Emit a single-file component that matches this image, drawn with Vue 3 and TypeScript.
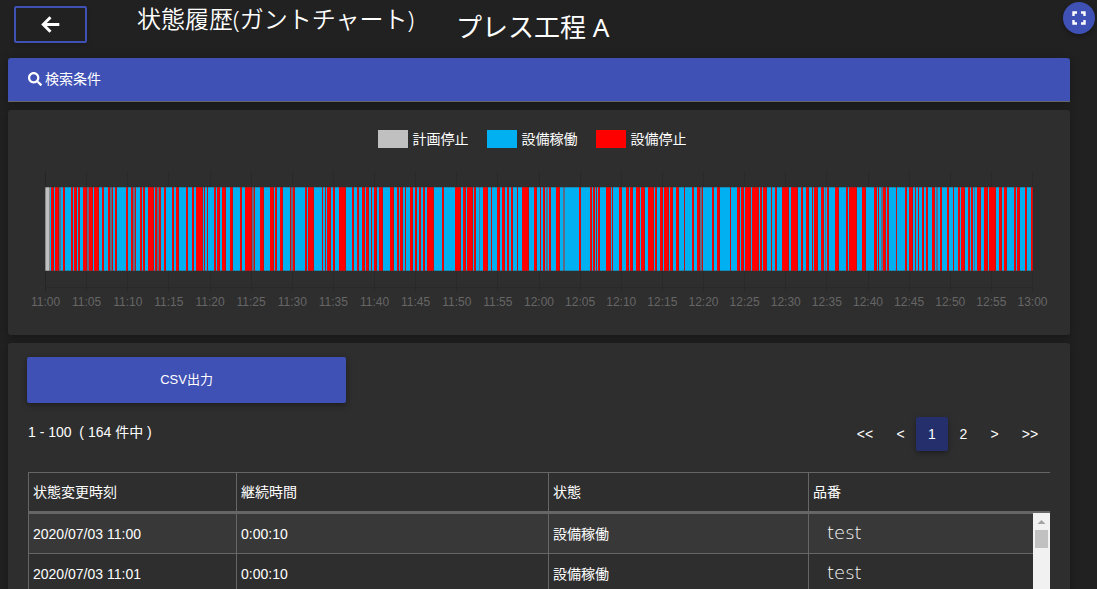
<script setup lang="ts">
import { ref } from 'vue'

type Span = [start: number, end: number]

interface LegendItem {
  label: string
  kind: string
}

interface HistoryRow {
  time: string
  duration: string
  state: string
  part: string
}

const legend: LegendItem[] = [
  { label: '計画停止', kind: 'planned' },
  { label: '設備稼働', kind: 'running' },
  { label: '設備停止', kind: 'stopped' },
]

const chartSpan = 988
const planned: Span = [1, 4]

const stopped: Span[] = [
  [6, 9], [10, 14], [18, 20], [26, 28], [29, 32], [33, 35], [38, 42], [44, 48], [49, 54], [57, 59],
  [63, 65], [67, 68], [70, 72], [81, 83], [86, 88], [90, 91], [95, 97], [98, 100], [103, 109], [110, 112],
  [114, 116], [119, 121], [127, 129], [131, 134], [141, 143], [147, 149], [151, 158], [159, 160], [162, 163],
  [169, 171], [172, 175], [177, 181], [185, 188], [195, 197], [200, 207], [209, 210], [215, 219], [225, 229],
  [230, 232], [235, 238], [245, 246], [248, 250], [260, 262], [263, 269], [277, 278], [280, 281], [282, 286],
  [288, 290], [294, 301], [307, 309], [312, 314], [317, 320], [321, 324], [326, 327], [329, 332], [334, 338],
  [345, 349], [352, 354], [355, 358], [360, 361], [365, 368], [370, 372], [374, 376], [378, 380], [382, 389],
  [397, 399], [410, 416], [418, 421], [422, 428], [429, 431], [438, 443], [446, 447], [452, 455], [457, 460],
  [462, 464], [466, 468], [472, 473], [477, 484], [489, 492], [495, 496], [498, 500], [504, 506], [511, 515],
  [534, 536], [545, 547], [548, 550], [551, 552], [553, 555], [561, 566], [567, 568], [574, 577], [581, 584],
  [585, 588], [591, 595], [596, 600], [603, 609], [610, 612], [615, 618], [619, 624], [625, 628], [631, 634],
  [639, 640], [647, 649], [652, 655], [657, 658], [667, 669], [672, 675], [685, 686], [692, 695], [696, 699],
  [700, 706], [707, 714], [715, 717], [718, 722], [726, 727], [730, 732], [737, 744], [746, 753], [756, 758],
  [761, 764], [767, 768], [769, 773], [776, 779], [782, 784], [790, 794], [801, 803], [804, 812], [817, 821],
  [829, 832], [833, 834], [838, 841], [842, 844], [851, 852], [860, 862], [864, 868], [870, 871], [873, 874],
  [877, 879], [881, 883], [887, 890], [895, 897], [902, 904], [908, 909], [913, 915], [916, 920], [923, 925],
  [926, 928], [932, 936], [939, 943], [944, 951], [954, 957], [959, 962], [969, 971], [972, 975], [980, 982],
  [986, 988],
]

const brief: Span[] = [
  [14, 16], [42, 44], [65, 67], [88, 90], [112, 114], [207, 209], [246, 248], [434, 435], [501, 503],
  [518, 520], [655, 657], [780, 781], [836, 838], [891, 893], [929, 930],
]

const ticks: string[] = Array.from({ length: 25 }, (_, i) => {
  const minutes = 11 * 60 + i * 5
  return `${Math.floor(minutes / 60)}:${String(minutes % 60).padStart(2, '0')}`
})

const rows: HistoryRow[] = [
  { time: '2020/07/03 11:00', duration: '0:00:10', state: '設備稼働', part: 'test' },
  { time: '2020/07/03 11:01', duration: '0:00:10', state: '設備稼働', part: 'test' },
]

const pages = ['<<', '<', '1', '2', '>', '>>']
const current = ref('1')

function go(target: string) {
  if (target === '<<' || target === '<') current.value = '1'
  else if (target === '>' || target === '>>') current.value = '2'
  else current.value = target
}
</script>

<template>
  <div class="page">
    <header class="header">
      <button class="back" type="button" aria-label="戻る">
        <svg width="20" height="18" viewBox="0 0 20 18" aria-hidden="true">
          <path d="M9.5 1.3 2.3 8.5l7.2 7.2M2.9 8.5h15.4" fill="none" stroke="#fff" stroke-width="3" />
        </svg>
      </button>
      <h1 class="title">状態履歴(ガントチャート)</h1>
      <h2 class="process">プレス工程 A</h2>
      <button class="fullscreen" type="button" aria-label="全画面">
        <svg width="14" height="14" viewBox="0 0 14 14" aria-hidden="true">
          <path d="M1.5 5V1.5H5M9 1.5h3.5V5M12.5 9v3.5H9M5 12.5H1.5V9" fill="none" stroke="#fff" stroke-width="2.4" />
        </svg>
      </button>
    </header>

    <main class="content">
      <button class="search" type="button">
        <svg width="14" height="14" viewBox="0 0 512 512" aria-hidden="true">
          <path
            fill="#fff"
            d="M505 442.7 405.3 343c-4.5-4.5-10.6-7-17-7H372c27.6-35.3 44-79.7 44-128C416 93.1 322.9 0 208 0S0 93.1 0 208s93.1 208 208 208c48.3 0 92.7-16.4 128-44v16.3c0 6.4 2.5 12.5 7 17l99.7 99.7c9.4 9.4 24.6 9.4 33.9 0l28.3-28.3c9.4-9.4 9.4-24.6.1-34zM208 336c-70.7 0-128-57.2-128-128 0-70.7 57.2-128 128-128 70.7 0 128 57.2 128 128 0 70.7-57.2 128-128 128z"
          />
        </svg>
        <span>検索条件</span>
      </button>

      <section class="card chart-card">
        <ul class="legend">
          <li v-for="item in legend" :key="item.kind">
            <span class="swatch" :class="item.kind"></span>{{ item.label }}
          </li>
        </ul>
        <div class="plot">
          <svg class="bars" :viewBox="`0 0 ${chartSpan} 84`" preserveAspectRatio="none" role="img" aria-label="状態履歴">
            <rect class="running" x="0" y="0" :width="chartSpan" height="84" />
            <rect class="planned-edge" x="0" y="0" width="5" height="84" />
            <rect class="planned" :x="planned[0]" y="0" :width="planned[1] - planned[0]" height="84" />
            <rect v-for="s in brief" :key="'b' + s[0]" class="brief" :x="s[0]" y="0" :width="s[1] - s[0]" height="84" />
            <template v-for="s in stopped" :key="s[0]">
              <rect class="stopped" :x="s[0]" y="0" :width="s[1] - s[0]" height="84" />
              <rect class="edge" :x="s[1] - 1" y="0" width="1" height="84" />
            </template>
            <rect class="edge" x="0" y="0" :width="chartSpan" height="1" />
            <rect class="edge" x="0" y="83" :width="chartSpan" height="1" />
          </svg>
          <ol class="axis">
            <li v-for="t in ticks" :key="t"><span>{{ t }}</span></li>
          </ol>
        </div>
      </section>

      <section class="card list-card">
        <button class="csv" type="button">CSV出力</button>
        <div class="list-bar">
          <p class="count">1 - 100&nbsp; ( 164 件中 )</p>
          <nav class="pager" aria-label="ページ">
            <button
              v-for="p in pages"
              :key="p"
              type="button"
              :class="{ wide: p.length > 1, active: p === current }"
              @click="go(p)"
            >{{ p }}</button>
          </nav>
        </div>
        <div class="table-wrap">
          <table class="history">
            <thead>
              <tr>
                <th class="c-time" scope="col">状態変更時刻</th>
                <th class="c-duration" scope="col">継続時間</th>
                <th class="c-state" scope="col">状態</th>
                <th scope="col">品番</th>
              </tr>
            </thead>
            <tbody>
              <tr v-for="r in rows" :key="r.time">
                <td>{{ r.time }}</td>
                <td>{{ r.duration }}</td>
                <td>{{ r.state }}</td>
                <td class="part">{{ r.part }}</td>
              </tr>
            </tbody>
          </table>
          <div class="scrollbar" aria-hidden="true">
            <svg width="17" height="17" viewBox="0 0 17 17"><path d="M4.5 11h8l-4-4z" fill="#a3a3a3" /></svg>
            <div class="thumb"></div>
          </div>
        </div>
      </section>
    </main>
  </div>
</template>

<style>
body {
  margin: 0;
  background: #212121;
}
</style>

<style scoped>
* {
  box-sizing: border-box;
}

.page {
  height: 100vh;
  overflow: hidden;
  background: #212121;
  color: #fff;
  font-family: "Liberation Sans", "Noto Sans CJK JP", sans-serif;
  font-size: 14px;
  line-height: 20px;
}

button {
  border: 0;
  margin: 0;
  padding: 0;
  color: #fff;
  font: inherit;
  cursor: pointer;
}

.header {
  display: flex;
  align-items: flex-start;
  height: 58px;
  padding: 2px 2px 0 14px;
}

.back {
  display: flex;
  align-items: center;
  justify-content: center;
  width: 73px;
  height: 37px;
  margin-top: 4px;
  border: 2px solid #3f51b5;
  border-radius: 2px;
  background: transparent;
  box-shadow: 0 2px 5px rgba(0, 0, 0, 0.2);
}

.title,
.process {
  margin: 0;
  font-family: "Noto Sans", "Noto Sans CJK JP", sans-serif;
  white-space: nowrap;
}

.title {
  margin-left: 50px;
  font-size: 24px;
  font-weight: 350;
  line-height: 34px;
}

.process {
  margin-left: 42px;
  font-size: 26px;
  font-weight: 400;
  line-height: 50px;
}

.fullscreen {
  display: flex;
  align-items: center;
  justify-content: center;
  width: 32px;
  height: 32px;
  margin-left: auto;
  border-radius: 50%;
  background: #3f51b5;
  box-shadow: 0 2px 5px rgba(0, 0, 0, 0.3);
}

.content {
  display: flex;
  flex-direction: column;
  gap: 8px;
  margin: 0 27px 0 8px;
}

.search {
  display: flex;
  align-items: center;
  gap: 3px;
  height: 44px;
  padding: 0 20px 2px;
  border-bottom: 1px solid #666;
  border-radius: 3px 3px 0 0;
  background: #3f51b5;
  box-shadow: 0 2px 10px rgba(0, 0, 0, 0.3);
}

.card {
  border-radius: 3px;
  background: #2e2e2e;
  box-shadow: 0 2px 10px rgba(0, 0, 0, 0.3);
}

.chart-card {
  padding: 19px 37px 23px;
}

.legend {
  display: flex;
  justify-content: center;
  gap: 18px;
  margin: 0;
  padding: 0 14px 0 0;
  list-style: none;
}

.legend li {
  display: flex;
  align-items: center;
  gap: 5px;
}

.swatch {
  width: 30px;
  height: 18px;
}

.swatch.planned {
  background: #c0c0c0;
}

.swatch.running {
  background: #00b0f0;
}

.swatch.stopped {
  background: #f00;
}

.plot {
  display: grid;
  margin-top: 22px;
}

.bars {
  z-index: 1;
  grid-area: 1 / 1;
  width: 100%;
  height: 84px;
  margin-top: 16px;
  shape-rendering: crispEdges;
}

.bars .planned {
  fill: #c0c0c0;
}

.bars .planned-edge {
  fill: #8a8a8a;
}

.bars .running {
  fill: #00b0f0;
}

.bars .stopped {
  fill: #f00;
}

.bars .brief {
  fill: #5c6c88;
}

.bars .edge {
  fill: rgba(60, 60, 60, 0.3);
}

.axis {
  display: flex;
  grid-area: 1 / 1;
  justify-content: space-between;
  height: 141px;
  margin: 0;
  padding: 0;
  background: linear-gradient(#292929, #292929) 0 116px / 100% 1px no-repeat;
  color: #666;
  font-size: 12px;
  list-style: none;
}

.axis li {
  display: flex;
  flex-direction: column;
  align-items: center;
  width: 1px;
}

.axis li::before {
  flex: none;
  width: 1px;
  height: 121px;
  background: #292929;
  content: "";
}

.axis li:first-child::before {
  background: #252525;
}

.list-card {
  padding: 14px 20px 0 19px;
}

.csv {
  display: block;
  width: 31.2%;
  height: 46px;
  border-radius: 2px;
  background: #3f51b5;
  box-shadow: 0 2px 6px rgba(0, 0, 0, 0.4);
  font-size: 13px;
}

.list-bar {
  display: flex;
  justify-content: space-between;
  margin-top: 14px;
}

.count {
  margin: 5px 0 0 1px;
}

.pager {
  display: flex;
}

.pager button {
  width: 31px;
  height: 34px;
  border-radius: 2px;
  background: transparent;
}

.pager .wide {
  width: 40px;
}

.pager .active {
  width: 32px;
  background: #252f6b;
  box-shadow: 0 2px 5px rgba(0, 0, 0, 0.35);
}

.table-wrap {
  position: relative;
  margin: 21px 0 0 1px;
}

.history {
  width: 100%;
  border-collapse: separate;
  border-spacing: 0;
  table-layout: fixed;
}

.c-time {
  width: 208px;
}

.c-duration {
  width: 312px;
}

.c-state {
  width: 260px;
}

.history th,
.history td {
  padding: 0 4px;
  border-left: 1px solid #666;
  font-weight: 400;
  text-align: left;
}

.history th {
  height: 42px;
  border-top: 1px solid #666;
  border-bottom: 3px solid #666;
}

.history td {
  height: 40px;
  border-bottom: 1px solid #666;
}

.history tbody tr:nth-child(odd) {
  background: #383838;
}

.history .part {
  padding: 0 18px 2px;
  font-family: "DejaVu Sans", sans-serif;
  font-size: 18px;
  font-weight: 200;
}

.scrollbar {
  position: absolute;
  top: 41px;
  right: 0;
  bottom: 0;
  width: 17px;
  background: #f1f1f1;
}

.scrollbar svg {
  display: block;
}

.thumb {
  height: 18px;
  margin: 0 2px;
  background: #c1c1c1;
}
</style>
